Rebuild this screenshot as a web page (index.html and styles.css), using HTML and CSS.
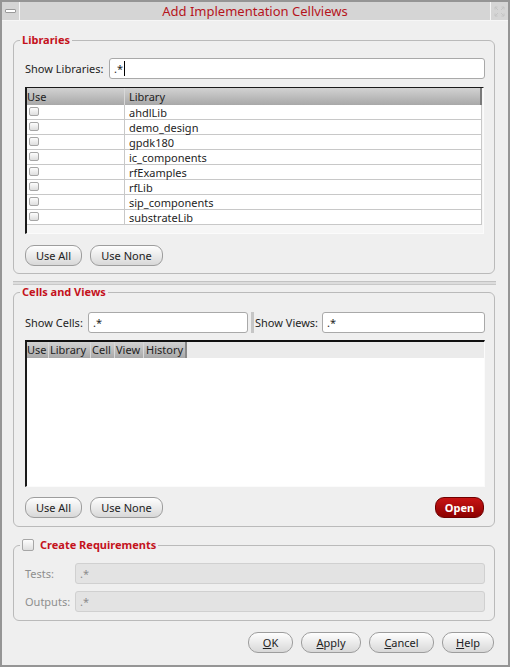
FILE: index.html
```html
<!DOCTYPE html>
<html>
<head>
<meta charset="utf-8">
<link rel="stylesheet" href="styles.css">
</head>
<body>
<div class="window">
  <div class="titlebar">
    <div class="tb-btn left"><span class="dash"></span></div>
    <div class="title">Add Implementation Cellviews</div>
    <div class="tb-btn right">
      <svg width="11" height="11" viewBox="0 0 11 11"><g fill="none" stroke="#c4c4c4" stroke-width="1"><path d="M1 1 L4 4 M1 1 L1 3.5 M1 1 L3.5 1"/><path d="M10 1 L7 4 M10 1 L10 3.5 M10 1 L7.5 1"/><path d="M1 10 L4 7 M1 10 L1 7.5 M1 10 L3.5 10"/><path d="M10 10 L7 7 M10 10 L10 7.5 M10 10 L7.5 10"/></g></svg>
    </div>
  </div>
  <div class="content">
    <div class="group g1">
      <div class="legend">Libraries</div>
      <div class="row r-first">
        <span class="lbl l-lib">Show Libraries:</span>
        <div class="field grow">.*<span class="caret"></span></div>
      </div>
      <div class="table t1">
        <div class="thead">
          <div class="c-use">Use</div>
          <div class="c-lib">Library</div>
        </div>
        <div class="trow"><div class="c-use"><span class="cb"></span></div><div class="c-lib">ahdlLib</div></div>
        <div class="trow"><div class="c-use"><span class="cb"></span></div><div class="c-lib">demo_design</div></div>
        <div class="trow"><div class="c-use"><span class="cb"></span></div><div class="c-lib">gpdk180</div></div>
        <div class="trow"><div class="c-use"><span class="cb"></span></div><div class="c-lib">ic_components</div></div>
        <div class="trow"><div class="c-use"><span class="cb"></span></div><div class="c-lib">rfExamples</div></div>
        <div class="trow"><div class="c-use"><span class="cb"></span></div><div class="c-lib">rfLib</div></div>
        <div class="trow"><div class="c-use"><span class="cb"></span></div><div class="c-lib">sip_components</div></div>
        <div class="trow"><div class="c-use"><span class="cb"></span></div><div class="c-lib">substrateLib</div></div>
      </div>
      <div class="btnrow b1">
        <button class="pill w-all">Use All</button>
        <button class="pill w-none">Use None</button>
      </div>
    </div>

    <div class="separator"></div>

    <div class="group g2">
      <div class="legend">Cells and Views</div>
      <div class="row r-cells">
        <span class="lbl l-cells">Show Cells:</span>
        <div class="field f-cells">.*</div>
        <div class="vsplit"></div>
        <span class="lbl l-views">Show Views:</span>
        <div class="field grow">.*</div>
      </div>
      <div class="table t2">
        <div class="thead2">
          <div class="h2 h-use">Use</div>
          <div class="h2 h-lib">Library</div>
          <div class="h2 h-cell">Cell</div>
          <div class="h2 h-view">View</div>
          <div class="h2 h-hist">History</div>
        </div>
      </div>
      <div class="btnrow b2">
        <button class="pill w-all">Use All</button>
        <button class="pill w-none">Use None</button>
        <button class="pill open">Open</button>
      </div>
    </div>

    <div class="group g3">
      <div class="legend"><span class="cb big"></span>Create Requirements</div>
      <div class="row r-tests">
        <span class="lbl dim l-req">Tests:</span>
        <div class="field grow dis">.*</div>
      </div>
      <div class="row r-outs">
        <span class="lbl dim l-req">Outputs:</span>
        <div class="field grow dis">.*</div>
      </div>
    </div>

    <div class="actions">
      <button class="pill act a-ok"><u>O</u>K</button>
      <button class="pill act a-apply"><u>A</u>pply</button>
      <button class="pill act a-cancel"><u>C</u>ancel</button>
      <button class="pill act a-help"><u>H</u>elp</button>
    </div>
  </div>
</div>
</body>
</html>
```

FILE: styles.css
```css
* { box-sizing: border-box; }
html, body { margin: 0; padding: 0; }
body {
  font-family: "Noto Sans", "DejaVu Sans", sans-serif;
  font-size: 11px;
  color: #1e1e1e;
  background: #efefef;
}
.window {
  width: 510px;
  height: 667px;
  border: 2px solid #959595;
  background: #efefef;
  display: flex;
  flex-direction: column;
  overflow: hidden;
}
.titlebar {
  height: 19px;
  display: flex;
  background: #d5d5d5;
  border-bottom: 1px solid #f6f6f6;
  flex: none;
}
.tb-btn {
  width: 18px;
  display: flex;
  align-items: center;
  justify-content: center;
}
.tb-btn.left { border-right: 1px solid #f6f6f6; }
.tb-btn.right { border-left: 1px solid #f6f6f6; }
.dash {
  width: 11px;
  height: 4px;
  border: 1px solid #9a9a9a;
  background: #fff;
  border-radius: 1px;
}
.title {
  flex: 1;
  text-align: center;
  color: #b5141c;
  font-size: 13px;
  line-height: 18px;
}
.content {
  flex: 1;
  padding: 0 13px 0 11px;
  display: flex;
  flex-direction: column;
}
.group {
  border: 1px solid #bababa;
  border-radius: 6px;
  padding: 0 9px 7px 11px;
  display: flex;
  flex-direction: column;
}
.g1 { margin-top: 19px; }
.g2 { margin-top: 7px; padding-bottom: 8px; }
.g3 { margin-top: 18px; padding-bottom: 8px; }
.legend {
  align-self: flex-start;
  margin: -8px 0 0 -5px;
  padding: 0 2px;
  height: 14px;
  line-height: 14px;
  background: #efefef;
  color: #c4121c;
  font-weight: bold;
  display: flex;
  align-items: center;
  gap: 6px;
}
.separator {
  margin-top: 7px;
  height: 4px;
  border-top: 1px solid #c2c2c2;
  border-bottom: 1px solid #c8c8c8;
  background: #dcdcdc;
  margin-right: -1px;
}
.row {
  display: flex;
  align-items: center;
  height: 21px;
  flex: none;
}
.r-first { margin-top: 11px; }
.r-cells { margin-top: 13px; }
.r-tests { margin-top: 11px; }
.r-outs { margin-top: 7px; }
.lbl { white-space: nowrap; }
.l-lib { width: 84px; }
.l-cells { width: 63px; }
.l-views { width: 67px; }
.l-req { width: 50px; }
.dim { color: #8e8e8e; }
.field {
  height: 21px;
  border: 1px solid #a9a9a9;
  border-radius: 3px;
  background: #fff;
  padding: 0 4px;
  display: flex;
  align-items: center;
  white-space: nowrap;
}
.grow { flex: 1; }
.f-cells { width: 160px; }
.field.dis {
  background: #e3e3e3;
  border-color: #d0d0d0;
  color: #8c8c8c;
}
.caret {
  display: inline-block;
  width: 1px;
  height: 15px;
  background: #000;
  margin-left: 1px;
}
.vsplit {
  width: 3px;
  height: 21px;
  background: #c6c6c6;
  margin: 0 1px 0 3px;
}
.table {
  flex: none;
  height: 147px;
  margin-right: 1px;
  border-top: 1px solid #1a1a1a;
  border-left: 2px solid #1a1a1a;
  border-right: 1px solid #fbfbfb;
  border-bottom: 1px solid #fbfbfb;
  background: #f6f6f6;
  padding-right: 1px;
}
.t1 { margin-top: 8px; }
.thead {
  display: flex;
  height: 17px;
  line-height: 17px;
  background: linear-gradient(#d2d2d2, #a8a8a8);
}
.thead .c-use { width: 98px; border-right: 1px solid #d8d8d8; }
.thead .c-lib { flex: 1; padding-left: 4px; border-right: 2px solid #7a7a7a; }
.trow {
  display: flex;
  height: 15px;
  line-height: 14px;
  background: #fff;
  border-bottom: 1px solid #c8c8c8;
  border-right: 1px solid #c8c8c8;
}
.trow .c-use { width: 98px; border-right: 1px solid #c8c8c8; }
.trow .c-lib { flex: 1; padding: 1px 0 0 4px; }
.cb {
  display: block;
  width: 10px;
  height: 9px;
  margin: 2px 0 0 2px;
  border: 1px solid #a6a6a6;
  border-radius: 2px;
  background: linear-gradient(#fdfdfd, #dedede);
}
.cb.big {
  width: 12px;
  height: 12px;
  margin: 0;
}
.t2 {
  margin-top: 7px;
  border-top: 2px solid #111;
  background: #fff;
  margin-right: 0;
  padding-right: 0;
}
.thead2 {
  display: flex;
  height: 16px;
  line-height: 16px;
  background: #ebebeb;
}
.h2 {
  background: linear-gradient(#d2d2d2, #a8a8a8);
  border-right: 1px solid #d8d8d8;
  padding-left: 1px;
}
.h-use { width: 22px; padding-left: 0; }
.h-lib { width: 42px; }
.h-cell { width: 24px; }
.h-view { width: 29px; }
.h-hist { width: 43px; padding-left: 2px; border-right: 2px solid #8a8a8a; }
.btnrow {
  display: flex;
  gap: 8px;
  flex: none;
}
.b1 { margin-top: 11px; }
.b2 { margin-top: 10px; }
.pill {
  height: 21px;
  border: 1px solid #9d9d9d;
  border-radius: 9px;
  background: linear-gradient(#fefefe, #d8d8d8);
  font: inherit;
  color: #222;
  padding: 0;
  margin: 0;
}
.w-all { width: 57px; }
.w-none { width: 73px; }
.open {
  width: 49px;
  margin-left: auto;
  margin-right: 1px;
  background: linear-gradient(#c81414, #8c0000);
  border-color: #6e0000;
  color: #fff;
  font-weight: bold;
}
.actions {
  display: flex;
  justify-content: flex-end;
  gap: 8px;
  margin-top: 11px;
  padding-right: 1px;
}
.act { border-radius: 10px; }
.a-ok { width: 45px; }
.a-apply { width: 60px; }
.a-cancel { width: 65px; }
.a-help { width: 52px; }
```
